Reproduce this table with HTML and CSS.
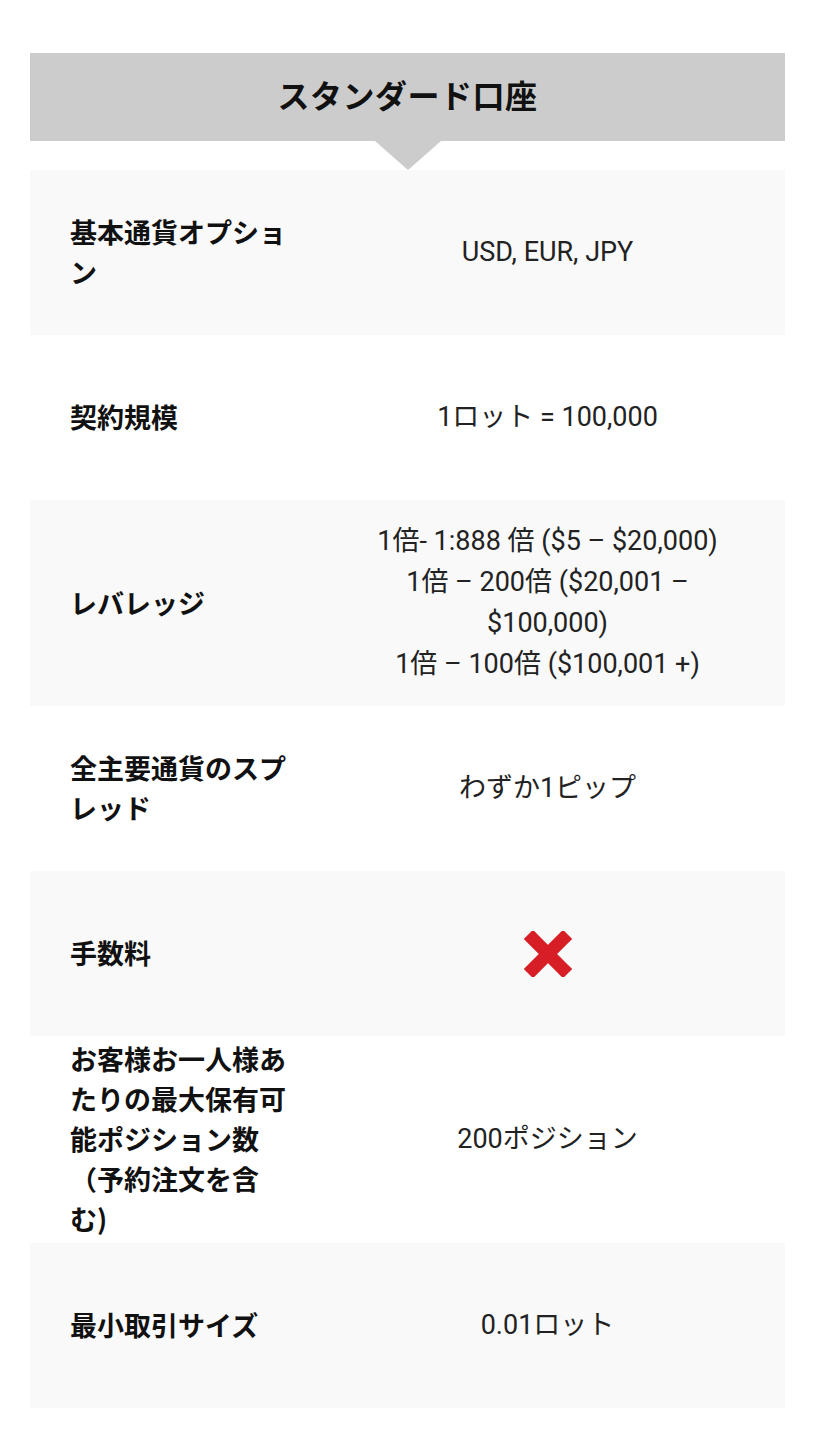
FILE: index.html
```html
<!DOCTYPE html>
<html lang="ja">
<head>
<meta charset="utf-8">
<title>スタンダード口座</title>
<link rel="stylesheet" href="styles.css">
</head>
<body>
<div class="wrap">
  <div class="head"><h2 class="title">スタンダード口座</h2></div>
  <div class="table">
    <div class="row shade">
      <div class="label">基本通貨オプション</div>
      <div class="value">USD, EUR, JPY</div>
    </div>
    <div class="row">
      <div class="label">契約規模</div>
      <div class="value">1ロット = 100,000</div>
    </div>
    <div class="row shade">
      <div class="label">レバレッジ</div>
      <div class="value tall">1倍- 1:888 倍 ($5 – $20,000)<br>1倍 – 200倍 ($20,001 – $100,000)<br>1倍 – 100倍 ($100,001 +)</div>
    </div>
    <div class="row">
      <div class="label">全主要通貨のスプレッド</div>
      <div class="value">わずか1ピップ</div>
    </div>
    <div class="row shade">
      <div class="label">手数料</div>
      <div class="value">
        <svg class="cross" width="48" height="46" viewBox="0 0 48 46" aria-label="なし">
          <path d="M9 8 L39 38 M39 8 L9 38" stroke="#d71d25" stroke-width="13" stroke-linecap="square" stroke-linejoin="round" fill="none"/>
        </svg>
      </div>
    </div>
    <div class="row">
      <div class="label long">お客様お一人様あたりの最大保有可能ポジション数（予約注文を含む)</div>
      <div class="value">200ポジション</div>
    </div>
    <div class="row shade">
      <div class="label">最小取引サイズ</div>
      <div class="value">0.01ロット</div>
    </div>
  </div>
</div>
</body>
</html>
```

FILE: styles.css
```css
html, body {
  margin: 0;
  padding: 0;
  background: #ffffff;
}
body {
  font-family: "Roboto", "Noto Sans CJK JP", sans-serif;
  color: #222222;
}
.wrap {
  margin: 53px 30px 0;
}
.head {
  position: relative;
  background: #cccccc;
  height: 88px;
  display: flex;
  align-items: center;
  justify-content: center;
  margin-bottom: 29px;
}
.head::after {
  content: "";
  position: absolute;
  left: 50%;
  top: 88px;
  margin-left: -33px;
  border-left: 33px solid transparent;
  border-right: 33px solid transparent;
  border-top: 29px solid #cccccc;
}
.title {
  margin: 0 0 6px;
  font-family: "Noto Sans CJK JP", sans-serif;
  font-weight: 600;
  font-size: 32px;
  color: #111111;
  letter-spacing: 0.5px;
}
.row {
  display: grid;
  grid-template-columns: 300px 1fr;
  min-height: 165px;
}
.shade {
  background: #f9f9f9;
}
.label {
  display: flex;
  align-items: center;
  padding: 3px 40px 4px 40px;
  font-family: "Noto Sans CJK JP", sans-serif;
  font-weight: 600;
  font-size: 27px;
  line-height: 40px;
  color: #111111;
}
.value {
  display: flex;
  align-items: center;
  justify-content: center;
  text-align: center;
  padding: 0 40px 0 20px;
  font-size: 27px;
  line-height: 41px;
  color: #222222;
}
.value.tall {
  padding-top: 21px;
  padding-bottom: 21px;
}
.cross {
  display: block;
}
```
